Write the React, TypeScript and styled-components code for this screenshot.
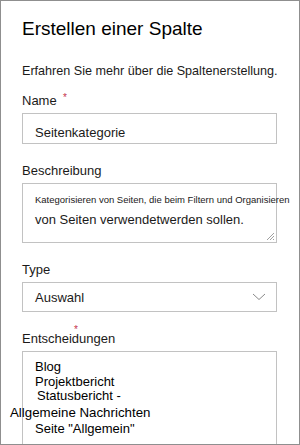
import styled, { createGlobalStyle } from "styled-components";

const GlobalStyle = createGlobalStyle`
  html, body {
    margin: 0;
    padding: 0;
    background: #ffffff;
  }
  * {
    box-sizing: border-box;
  }
`;

const Panel = styled.div`
  width: 300px;
  height: 445px;
  border: 1px solid #8f8f8f;
  overflow: hidden;
  padding: 16px 22px 0 21px;
  font-family: "Liberation Sans", Arial, sans-serif;
  color: #1b1a19;
  display: flex;
  flex-direction: column;
`;

const Title = styled.h1`
  margin: 0;
  font-size: 19px;
  line-height: 24px;
  font-weight: normal;
  color: #000000;
`;

const Intro = styled.p`
  margin: 22px 0 0;
  font-size: 12.6px;
  line-height: 16px;
  white-space: nowrap;
`;

const Form = styled.div`
  margin-top: 13px;
  display: flex;
  flex-direction: column;
  gap: 18px;
`;

const Field = styled.div`
  display: flex;
  flex-direction: column;
`;

const Label = styled.label`
  position: relative;
  font-size: 13px;
  line-height: 18px;
  margin-bottom: 3px;
  align-self: flex-start;
`;

const Star = styled.span<{ $x: number; $y: number }>`
  position: absolute;
  left: ${(p) => p.$x}px;
  top: ${(p) => p.$y}px;
  color: #c4314b;
  font-size: 10px;
  line-height: 10px;
`;

const Box = styled.div<{ $h?: number }>`
  position: relative;
  width: 255px;
  height: ${(p) => (p.$h ? `${p.$h}px` : "auto")};
  border: 1px solid #c2c2c2;
  background: #ffffff;
`;

const InputText = styled.div`
  padding: 11px 12px 0;
  font-size: 13px;
  line-height: 16px;
`;

const SmallText = styled.div`
  padding: 10px 0 0 12px;
  font-size: 9.5px;
  line-height: 12px;
  white-space: nowrap;
`;

const DescText = styled.div`
  padding: 6px 12px 0;
  font-size: 13px;
  line-height: 16px;
`;

const Grip = styled.svg`
  position: absolute;
  right: 1px;
  bottom: 1px;
`;

const SelectBox = styled(Box)`
  display: flex;
  align-items: center;
  justify-content: space-between;
  padding: 0 10px 0 12px;
  font-size: 13px;
`;

const ChoiceList = styled(Box)`
  height: 120px;
  padding-top: 8px;
`;

const Choice = styled.div<{ $indent: number; $size?: number }>`
  margin-left: ${(p) => p.$indent}px;
  font-size: ${(p) => p.$size ?? 13}px;
  line-height: ${(p) => (p.$size ? 18 : 14.5)}px;
  white-space: nowrap;
  color: #000000;
`;

const choices = [
  { text: "Blog", indent: 12 },
  { text: "Projektbericht", indent: 12 },
  { text: "Statusbericht -", indent: 14 },
  { text: "Allgemeine Nachrichten", indent: -13, size: 13.3 },
  { text: "Seite \"Allgemein\"", indent: 12 },
];

const App = () => {
  return (
    <>
      <GlobalStyle />
      <Panel>
        <Title>Erstellen einer Spalte</Title>
        <Intro>Erfahren Sie mehr über die Spaltenerstellung.</Intro>
        <Form>
          <Field>
            <Label>
              Name
              <Star $x={41} $y={1}>*</Star>
            </Label>
            <Box $h={31}>
              <InputText>Seitenkategorie</InputText>
            </Box>
          </Field>
          <Field>
            <Label>Beschreibung</Label>
            <Box $h={60}>
              <SmallText>Kategorisieren von Seiten, die beim Filtern und Organisieren</SmallText>
              <DescText>von Seiten verwendetwerden sollen.</DescText>
              <Grip width="10" height="10" viewBox="0 0 10 10">
                <path d="M9 2 L2 9 M9 5 L5 9 M9 8 L8 9" stroke="#a0a0a0" strokeWidth="1" />
              </Grip>
            </Box>
          </Field>
          <Field>
            <Label>Type</Label>
            <SelectBox $h={30}>
              <span>Auswahl</span>
              <svg width="14" height="8" viewBox="0 0 14 8">
                <path d="M1 1 L7 6.5 L13 1" fill="none" stroke="#8a8a8a" strokeWidth="1" />
              </svg>
            </SelectBox>
          </Field>
          <Field>
            <Label>
              Entscheidungen
              <Star $x={52} $y={-5}>*</Star>
            </Label>
            <ChoiceList>
              {choices.map((c) => (
                <Choice key={c.text} $indent={c.indent} $size={c.size}>
                  {c.text}
                </Choice>
              ))}
            </ChoiceList>
          </Field>
        </Form>
      </Panel>
    </>
  );
};

export default App;
